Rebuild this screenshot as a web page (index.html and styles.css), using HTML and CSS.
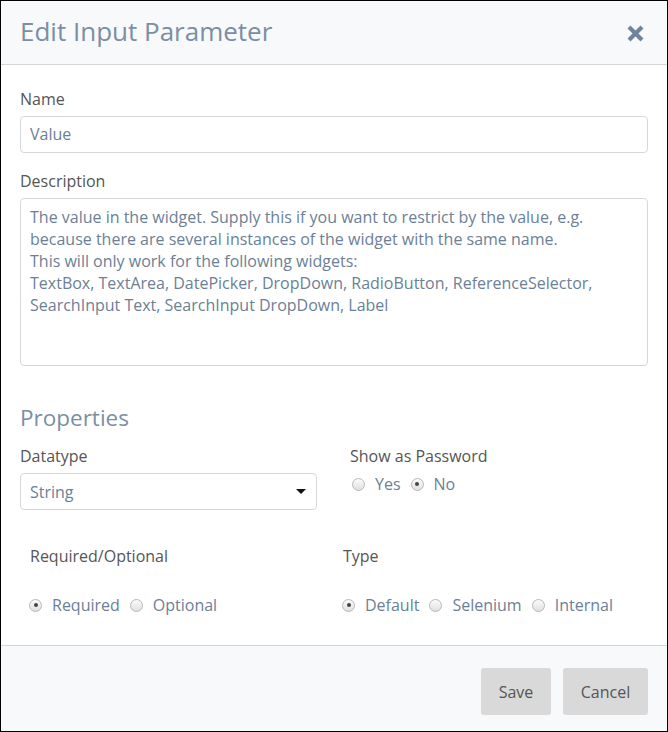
FILE: index.html
```html
<!DOCTYPE html>
<html>
<head>
<meta charset="utf-8">
<link rel="stylesheet" href="styles.css">
</head>
<body>
<div class="modal">
  <div class="header">
    <h1 class="title">Edit Input Parameter</h1>
    <button class="close" aria-label="Close">
      <svg width="19" height="19" viewBox="0 0 19 19"><path d="M3 3 L16 16 M16 3 L3 16" stroke="#6f849b" stroke-width="4.2" stroke-linecap="butt"/></svg>
    </button>
  </div>
  <div class="body">
    <div class="field">
      <label class="label">Name</label>
      <div class="input">Value</div>
    </div>
    <div class="field">
      <label class="label">Description</label>
      <div class="textarea">The value in the widget. Supply this if you want to restrict by the value, e.g.<br>because there are several instances of the widget with the same name.<br>This will only work for the following widgets:<br>TextBox, TextArea, DatePicker, DropDown, RadioButton, ReferenceSelector,<br>SearchInput Text, SearchInput DropDown, Label</div>
    </div>
    <h2 class="section">Properties</h2>
    <div class="row1">
      <div class="col-left">
        <label class="label">Datatype</label>
        <div class="select"><span>String</span><span class="caret"></span></div>
      </div>
      <div class="col-right">
        <label class="label">Show as Password</label>
        <div class="radios pw">
          <span class="radio"></span><span class="rlabel">Yes</span>
          <span class="radio checked"></span><span class="rlabel">No</span>
        </div>
      </div>
    </div>
    <div class="row2">
      <div class="col2-left">
        <label class="label">Required/Optional</label>
        <div class="radios">
          <span class="radio checked"></span><span class="rlabel">Required</span>
          <span class="radio"></span><span class="rlabel">Optional</span>
        </div>
      </div>
      <div class="col2-right">
        <label class="label">Type</label>
        <div class="radios">
          <span class="radio checked"></span><span class="rlabel">Default</span>
          <span class="radio"></span><span class="rlabel">Selenium</span>
          <span class="radio"></span><span class="rlabel">Internal</span>
        </div>
      </div>
    </div>
  </div>
  <div class="footer">
    <button class="btn save">Save</button>
    <button class="btn cancel">Cancel</button>
  </div>
</div>
</body>
</html>
```
FILE: styles.css
```css
* { box-sizing: border-box; }
html, body { margin: 0; padding: 0; background: #fff; }
body { font-family: "Open Sans", "Liberation Sans", sans-serif; }
.modal {
  width: 668px;
  height: 732px;
  border: 1px solid #000;
  display: flex;
  flex-direction: column;
  background: #fff;
}
.header {
  height: 64px;
  background: #f7f9fb;
  border-bottom: 1px solid #d5d5d5;
  display: flex;
  align-items: center;
  justify-content: space-between;
  padding: 0 22px 3px 19px;
}
.title {
  margin: 0;
  font-weight: 400;
  font-size: 26px;
  line-height: 34px;
  color: #7b8fa3;
}
.close {
  border: 0;
  background: none;
  padding: 0;
  width: 19px;
  height: 19px;
  display: flex;
  margin-top: 4px;
}
.body {
  flex: 1;
  padding: 24px 19px 0 19px;
}
.label {
  display: block;
  font-size: 16px;
  color: #555;
  line-height: 20px;
}
.field { margin-bottom: 18px; }
.field .label { margin-bottom: 7px; }
.input, .textarea, .select {
  border: 1px solid #d8d8d8;
  border-radius: 4px;
  font-size: 16px;
  color: #6b7f96;
}
.input {
  height: 37px;
  line-height: 35px;
  padding: 0 9px;
}
.textarea {
  height: 168px;
  padding: 7px 9px 6px;
  line-height: 22px;
}
.section {
  margin: 36px 0 12px 0;
  font-weight: 400;
  font-size: 22.5px;
  color: #7b8fa3;
  line-height: 32px;
}
.row1 { display: flex; }
.col-left { width: 297px; }
.col-left .label { margin-bottom: 7px; }
.col-right { margin-left: 33px; }
.select {
  height: 37px;
  display: flex;
  align-items: center;
  justify-content: space-between;
  padding: 0 9px;
}
.caret {
  width: 0; height: 0;
  border-left: 5px solid transparent;
  border-right: 5px solid transparent;
  border-top: 5px solid #111;
  margin-right: 1px;
}
.radios {
  display: flex;
  align-items: center;
  font-size: 16px;
  color: #6b7f96;
  height: 22px;
  margin-top: 7px;
}
.radios.pw { padding-left: 2px; }
.radio {
  width: 13px; height: 13px;
  border-radius: 50%;
  border: 1px solid #b8b8b8;
  background: linear-gradient(#fbfbfb, #e0e0e0);
  margin-right: 10px;
  position: relative;
  flex: none;
}
.radio.checked::after {
  content: "";
  position: absolute;
  left: 3.5px; top: 3.5px;
  width: 4px; height: 4px;
  border-radius: 50%;
  background: #444;
}
.rlabel { margin-right: 10px; }
.row2 { display: flex; margin-top: 36px; padding-left: 10px; }
.col2-left { width: 313px; }
.row2 .radios { margin-top: 28px; margin-left: -1px; }
.footer {
  height: 86px;
  background: #f7f9fb;
  border-top: 1px solid #d5d5d5;
  display: flex;
  justify-content: flex-end;
  align-items: flex-start;
  padding: 22px 19px 0 0;
  gap: 12px;
}
.btn {
  border: 0;
  border-radius: 3px;
  background: #d9d9d9;
  font-family: "Open Sans", "Liberation Sans", sans-serif;
  font-size: 16px;
  color: #555;
  height: 47px;
}
.save { width: 70px; }
.cancel { width: 85px; }
```
